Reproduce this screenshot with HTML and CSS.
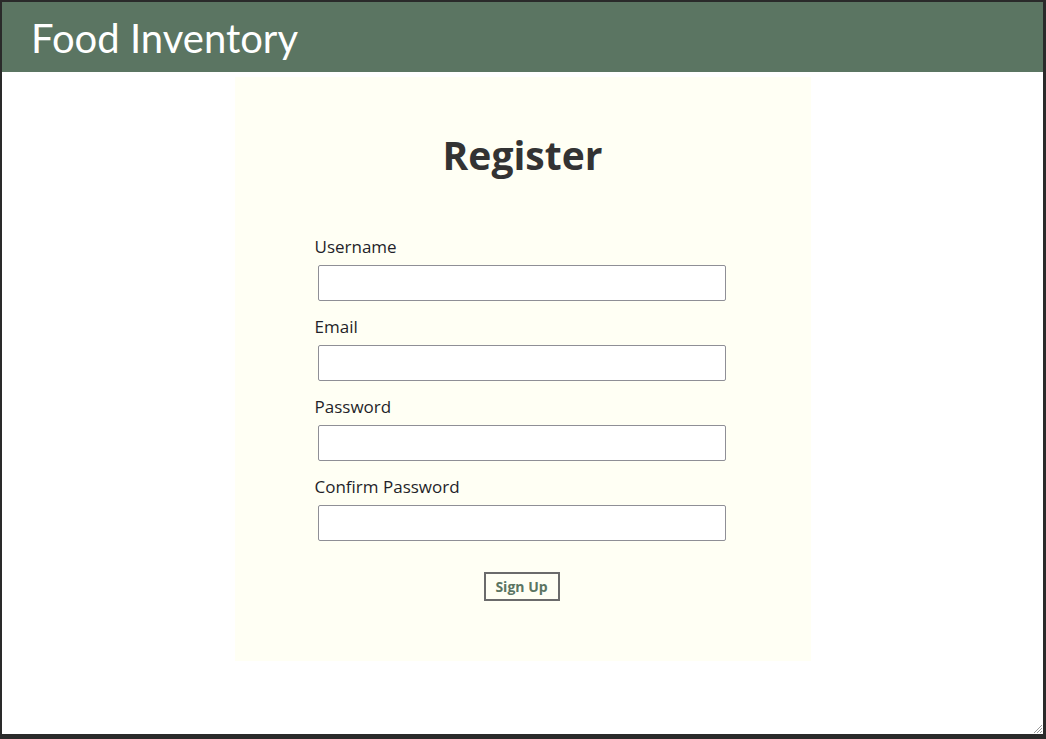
FILE: index.html
```html
<!DOCTYPE html>
<html lang="en">
<head>
<meta charset="utf-8">
<title>Food Inventory - Register</title>
<link rel="stylesheet" href="styles.css">
</head>
<body>
<div class="frame">
  <header class="topbar">
    <h1 class="brand">Food Inventory</h1>
  </header>
  <main class="page">
    <section class="card">
      <h2 class="card-title">Register</h2>
      <form class="form">
        <div class="field">
          <label class="label" for="username">Username</label>
          <input class="input" id="username" type="text">
        </div>
        <div class="field">
          <label class="label" for="email">Email</label>
          <input class="input" id="email" type="email">
        </div>
        <div class="field">
          <label class="label" for="password">Password</label>
          <input class="input" id="password" type="password">
        </div>
        <div class="field">
          <label class="label" for="confirm">Confirm Password</label>
          <input class="input" id="confirm" type="password">
        </div>
        <div class="actions">
          <button class="btn" type="button">Sign Up</button>
        </div>
      </form>
    </section>
  </main>
  <svg class="grip" width="12" height="12" viewBox="0 0 12 12">
    <path d="M11 3 L3 11 M11 6 L6 11 M11 9 L9 11" stroke="#9a9a9a" stroke-width="1"/>
  </svg>
</div>
</body>
</html>
```
FILE: styles.css
```css
html, body {
  margin: 0;
  padding: 0;
  height: 100%;
}
body {
  background: #2a2a2a;
  font-family: "Open Sans", "Liberation Sans", sans-serif;
}
.frame {
  position: relative;
  margin: 2px 3px 0 2px;
  height: 732px;
  background: #ffffff;
  overflow: hidden;
}
.topbar {
  height: 70px;
  background: #5b7562;
  display: flex;
  align-items: center;
  padding-left: 29px;
}
.brand {
  margin: 2px 0 0 0;
  color: #ffffff;
  font-family: "Lato", sans-serif;
  font-weight: 400;
  font-size: 40px;
  line-height: 1;
}
.page {
  display: flex;
  justify-content: center;
  padding-top: 5px;
}
.card {
  width: 576px;
  height: 584px;
  background: #fffff4;
  box-sizing: border-box;
  padding-top: 54px;
}
.card-title {
  margin: 0;
  text-align: center;
  color: #333333;
  font-family: "Open Sans", sans-serif;
  font-weight: 700;
  font-size: 39px;
  line-height: 48px;
}
.form {
  margin: 57px 0 0 80px;
  width: 414px;
}
.field {
  display: flex;
  flex-direction: column;
  align-items: flex-start;
  margin-bottom: 15px;
}
.label {
  color: #1f1f2a;
  font-family: "Open Sans", sans-serif;
  font-size: 17px;
  line-height: 22px;
  margin-bottom: 7px;
}
.input {
  margin: 0 0 0 3px;
  width: 408px;
  height: 36px;
  box-sizing: border-box;
  border: 1px solid #8f8f96;
  border-radius: 2px;
  background: #ffffff;
  padding: 0 6px;
}
.actions {
  display: flex;
  justify-content: center;
  padding-top: 16px;
}
.btn {
  width: 76px;
  height: 29px;
  box-sizing: border-box;
  border: 2px solid #6b6b6b;
  background: transparent;
  color: #5b7562;
  font-family: "Open Sans", sans-serif;
  font-weight: 700;
  font-size: 14px;
  line-height: 1;
  padding: 0;
}
.grip {
  position: absolute;
  right: 0;
  bottom: 0;
}
```
